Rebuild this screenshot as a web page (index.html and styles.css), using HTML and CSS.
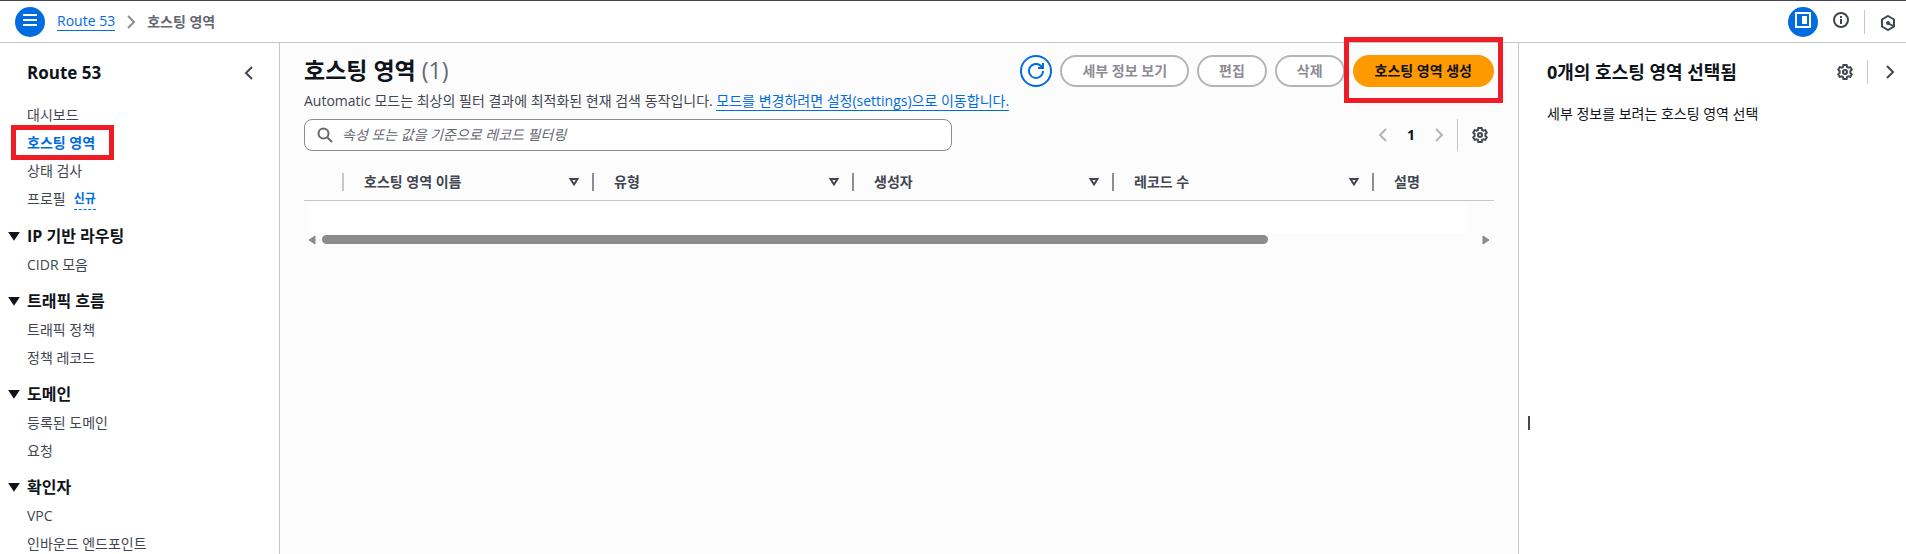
FILE: index.html
```html
<!DOCTYPE html>
<html lang="ko">
<head>
<meta charset="utf-8">
<meta name="viewport" content="width=device-width, initial-scale=1">
<title>호스팅 영역 - Route 53</title>
<link rel="stylesheet" href="styles.css">
</head>
<body>
<svg class="sprite" aria-hidden="true">
  <symbol id="gear" viewBox="0 0 16 16">
    <path d="M6.400 1h3.200l.5 2 1.200.7 2-.6 1.500 2.500-1.400 1.400v2l1.400 1.400-1.500 2.500-2-.6-1.200.7-.5 2H6.400l-.5-2-1.200-.7-2 .6-1.500-2.500L2.600 9V7L1.200 5.600l1.500-2.500 2 .6L5.900 3z"/>
    <circle cx="8" cy="8" r="2"/>
  </symbol>
  <symbol id="left" viewBox="0 0 16 16"><path d="M11 2 5 8l6 6"/></symbol>
  <symbol id="right" viewBox="0 0 16 16"><path d="m5 2 6 6-6 6"/></symbol>
  <symbol id="down" viewBox="0 0 12 10"><path d="M2 2h8L6 8z"/></symbol>
  <symbol id="sort" viewBox="0 0 12 10"><path d="M2.500 2h7L6 7.500z"/></symbol>
</svg>
<header class="topbar">
  <button class="round menu" aria-label="메뉴"><svg class="icon" viewBox="0 0 16 16"><path d="M1 3h14M1 8h14M1 13h14"/></svg></button>
  <nav class="crumbs" aria-label="이동 경로">
    <a class="link" href="#">Route 53</a>
    <svg class="icon crumb-sep" aria-hidden="true"><use href="#right"/></svg>
    <span class="current">호스팅 영역</span>
  </nav>
  <div class="tools">
    <button class="round" aria-label="분할 패널"><svg class="icon" viewBox="0 0 16 16"><path d="M1 1h14v14H1z"/><path class="solid" d="M7 4h5v8H7z"/></svg></button>
    <button class="plain info" aria-label="정보"><svg class="icon" viewBox="0 0 16 16"><circle cx="8" cy="8" r="7"/><path d="M8 7v5M8 4v2"/></svg></button>
    <span class="rule"></span>
    <button class="plain hex" aria-label="도구"><svg class="icon" viewBox="0 0 16 16"><path d="m8 1 6 3.500v7L8 15l-6-3.500v-7zM8 8l5 3"/><circle class="solid" cx="8" cy="8" r="2"/></svg></button>
  </div>
</header>
<div class="layout">
  <aside class="side">
    <div class="side-head">
      <h2>Route 53</h2>
      <button class="plain" aria-label="탐색 닫기"><svg class="icon"><use href="#left"/></svg></button>
    </div>
    <nav class="nav" aria-label="Route 53">
      <ul>
        <li><a href="#">대시보드</a></li>
        <li><a class="active marked" href="#" aria-current="page">호스팅 영역</a></li>
        <li><a href="#">상태 검사</a></li>
        <li><a href="#">프로필</a><a class="new" href="#">신규</a></li>
      </ul>
      <button class="group"><svg class="caret"><use href="#down"/></svg>IP 기반 라우팅</button>
      <ul>
        <li><a href="#">CIDR 모음</a></li>
      </ul>
      <button class="group"><svg class="caret"><use href="#down"/></svg>트래픽 흐름</button>
      <ul>
        <li><a href="#">트래픽 정책</a></li>
        <li><a href="#">정책 레코드</a></li>
      </ul>
      <button class="group"><svg class="caret"><use href="#down"/></svg>도메인</button>
      <ul>
        <li><a href="#">등록된 도메인</a></li>
        <li><a href="#">요청</a></li>
      </ul>
      <button class="group"><svg class="caret"><use href="#down"/></svg>확인자</button>
      <ul>
        <li><a href="#">VPC</a></li>
        <li><a href="#">인바운드 엔드포인트</a></li>
      </ul>
    </nav>
  </aside>
  <main class="main">
    <div class="title-row">
      <h1>호스팅 영역 <span class="count">(1)</span></h1>
      <div class="actions">
        <button class="btn refresh" aria-label="새로 고침"><svg class="icon" viewBox="0 0 16 16"><path d="M15 8a7 7 0 1 1-2-5l1.500 1.500"/><path d="M15 0v5h-5"/></svg></button>
        <button class="btn" disabled>세부 정보 보기</button>
        <button class="btn" disabled>편집</button>
        <button class="btn" disabled>삭제</button>
        <span class="marked-action"><button class="btn primary">호스팅 영역 생성</button></span>
      </div>
    </div>
    <p class="desc">Automatic 모드는 최상의 필터 결과에 최적화된 현재 검색 동작입니다. <a class="link" href="#">모드를 변경하려면 설정(settings)으로 이동합니다.</a></p>
    <div class="filter-row">
      <label class="search">
        <svg class="icon" viewBox="0 0 16 16" aria-hidden="true"><circle cx="6.500" cy="6.500" r="5"/><path d="m10.500 10.500 4.500 4.500"/></svg>
        <input type="search" aria-label="레코드 필터링" placeholder="속성 또는 값을 기준으로 레코드 필터링">
      </label>
      <div class="pager">
        <button class="plain" disabled aria-label="이전 페이지"><svg class="icon"><use href="#left"/></svg></button>
        <button class="plain page">1</button>
        <button class="plain" disabled aria-label="다음 페이지"><svg class="icon"><use href="#right"/></svg></button>
        <span class="rule"></span>
        <button class="plain" aria-label="기본 설정"><svg class="icon"><use href="#gear"/></svg></button>
      </div>
    </div>
    <table class="zones">
      <colgroup><col class="c-pick"><col class="c-name"><col class="c-data"><col class="c-data"><col class="c-data"><col></colgroup>
      <thead>
        <tr>
          <th class="pick" aria-label="선택"></th>
          <th><div class="cell">호스팅 영역 이름<svg class="caret"><use href="#sort"/></svg></div></th>
          <th><div class="cell">유형<svg class="caret"><use href="#sort"/></svg></div></th>
          <th><div class="cell">생성자<svg class="caret"><use href="#sort"/></svg></div></th>
          <th><div class="cell">레코드 수<svg class="caret"><use href="#sort"/></svg></div></th>
          <th class="last"><div class="cell">설명</div></th>
        </tr>
      </thead>
    </table>
    <div class="blank"></div>
    <div class="scroll" aria-hidden="true">
      <svg class="arrow" viewBox="0 0 8 10"><path d="M7 1v8L1 5z"/></svg>
      <div class="track"><div class="thumb"></div></div>
      <svg class="arrow" viewBox="0 0 8 10"><path d="M1 1v8l6-4z"/></svg>
    </div>
  </main>
  <aside class="detail">
    <button class="handle" aria-label="패널 크기 조정"></button>
    <div class="detail-head">
      <h2>0개의 호스팅 영역 선택됨</h2>
      <div class="detail-tools">
        <button class="plain" aria-label="패널 설정"><svg class="icon"><use href="#gear"/></svg></button>
        <span class="rule"></span>
        <button class="plain" aria-label="패널 닫기"><svg class="icon"><use href="#right"/></svg></button>
      </div>
    </div>
    <p>세부 정보를 보려는 호스팅 영역 선택</p>
  </aside>
</div>
</body>
</html>
```
FILE: styles.css
```css
:root {
  --blue: #006ce0;
  --ink: #0f141a;
  --text: #424650;
  --muted: #656871;
  --line: #c6c6cd;
  --disabled: #b4b4bb;
  --red: #ee1c25;
}
* { box-sizing: border-box; }
body {
  margin: 0;
  height: 100vh;
  overflow: hidden;
  display: flex;
  flex-direction: column;
  font: 14px/20px "Open Sans", "Noto Sans CJK KR", sans-serif;
  color: var(--text);
  background: #fff;
}
h1, h2, p, ul { margin: 0; padding: 0; }
ul { list-style: none; }
h1, h2 { color: var(--ink); font-weight: 700; }
h2 { font-size: 18px; line-height: 24px; }
a { color: inherit; text-decoration: none; }
button { font: inherit; color: inherit; padding: 0; border: 0; background: none; }
svg { display: block; flex: none; fill: none; stroke: currentColor; stroke-width: 2; }
.sprite { display: none; }
.icon { width: 16px; height: 16px; }
.caret { width: 12px; height: 10px; }
.solid { fill: currentColor; stroke: none; }
.link { color: var(--blue); border-bottom: 1px solid; }
.rule { width: 1px; height: 24px; background: var(--line); }

.topbar {
  flex: none;
  height: 43px;
  display: flex;
  align-items: center;
  padding: 0 10px 0 15px;
  border-top: 1px solid var(--text);
  border-bottom: 1px solid var(--line);
}
.round {
  width: 30px;
  height: 30px;
  padding: 5px 7px 9px;
  border-radius: 50%;
  background: var(--blue);
  color: #fff;
}
.crumbs { display: flex; align-items: center; gap: 8px; margin-left: 12px; }
.crumbs .link { line-height: 18px; }
.crumb-sep { color: #8c8c94; }
.current { color: var(--muted); font-weight: 700; }
.tools { margin-left: auto; display: flex; align-items: center; gap: 15px; }
.info { padding-bottom: 4px; }
.hex { padding-top: 2px; }

.layout { flex: 1; min-height: 0; display: flex; }
.side { flex: none; width: 280px; border-right: 1px solid var(--line); overflow: hidden; }
.side-head {
  display: flex;
  align-items: center;
  justify-content: space-between;
  padding: 18px 22px 16px 27px;
}
.side-head h2 { font-size: 17px; }
.nav li { display: flex; gap: 8px; padding: 4px 0 4px 27px; }
.nav .active { color: var(--blue); font-weight: 700; }
.marked { position: relative; }
.marked::after {
  content: "";
  position: absolute;
  inset: -8px -19px -7px -16px;
  border: 5px solid var(--red);
  pointer-events: none;
}
.new { color: var(--blue); font-size: 12px; font-weight: 700; border-bottom: 1px dashed; }
.group {
  display: flex;
  align-items: center;
  gap: 7px;
  width: 100%;
  height: 30px;
  margin-top: 7px;
  padding-left: 8px;
  color: var(--ink);
  font-size: 16px;
  font-weight: 700;
}
.group svg { fill: currentColor; }

.main { flex: 1; min-width: 0; padding: 12px 24px; background: #fcfcfd; }
.title-row { display: flex; justify-content: space-between; align-items: flex-start; height: 32px; }
h1 { font-size: 23px; line-height: 30px; }
.count { color: var(--muted); font-weight: 400; }
.actions { display: flex; gap: 8px; }
.btn {
  height: 32px;
  padding: 0 20px;
  border: 2px solid var(--blue);
  border-radius: 16px;
  background: #fff;
  color: var(--blue);
  font-weight: 700;
  white-space: nowrap;
}
.btn:disabled { border-color: var(--disabled); color: #8c8c94; }
.refresh { width: 32px; padding: 0 6px; }
.primary { border-color: #f90; background: #f90; color: var(--ink); }
.marked-action { position: relative; }
.marked-action::after {
  content: "";
  position: absolute;
  inset: -18px -9px -16px -9px;
  border: 5px solid var(--red);
  pointer-events: none;
}
.desc { margin-top: 4px; }
.filter-row { display: flex; justify-content: space-between; align-items: center; margin-top: 8px; }
.search {
  display: flex;
  align-items: center;
  gap: 9px;
  width: 648px;
  height: 32px;
  padding: 0 12px;
  border: 1px solid #8c8c94;
  border-radius: 8px;
  background: #fff;
  color: var(--muted);
}
.search input { flex: 1; min-width: 0; padding: 0; border: 0; outline: 0; background: none; font: inherit; }
.search input::placeholder { color: var(--muted); font-style: italic; opacity: 1; }
.pager { display: flex; align-items: center; padding-right: 6px; }
.pager .plain:disabled { color: var(--disabled); }
.page { width: 40px; color: var(--ink); font-weight: 700; }
.pager .rule { height: 32px; margin: 0 14px 0 10px; }

.zones { width: 100%; margin-top: 12px; table-layout: fixed; border-collapse: collapse; border-bottom: 1px solid var(--line); }
.c-pick { width: 40px; }
.c-name { width: 250px; }
.c-data { width: 260px; }
.zones th { height: 37px; padding: 10px 0 8px; text-align: left; font-weight: 700; }
.cell { display: flex; align-items: center; justify-content: space-between; height: 18px; padding: 0 12px 0 20px; border-right: 2px solid #8c8c94; }
.pick::after { content: ""; display: block; height: 18px; border-right: 2px solid var(--line); }
.last .cell { border: 0; }
.blank { height: 28px; margin: 4px 28px 0 5px; background: #fff; }
.scroll { display: flex; align-items: center; gap: 6px; margin-top: 2px; padding: 0 4px; }
.track { flex: 1; }
.thumb { width: 82%; height: 9px; border-radius: 5px; background: #8b8b8b; }
.arrow { width: 8px; height: 10px; fill: #8b8b8b; stroke: #8b8b8b; stroke-width: 1; }

.detail { position: relative; flex: none; width: 388px; padding: 17px 8px 0 28px; border-left: 1px solid var(--line); color: var(--ink); }
.detail-head { display: flex; align-items: center; justify-content: space-between; }
.detail-tools { display: flex; align-items: center; gap: 14px; color: var(--text); }
.detail p { margin-top: 20px; }
.handle { position: absolute; left: 9px; top: 73%; width: 2px; height: 14px; background: var(--text); }
```
